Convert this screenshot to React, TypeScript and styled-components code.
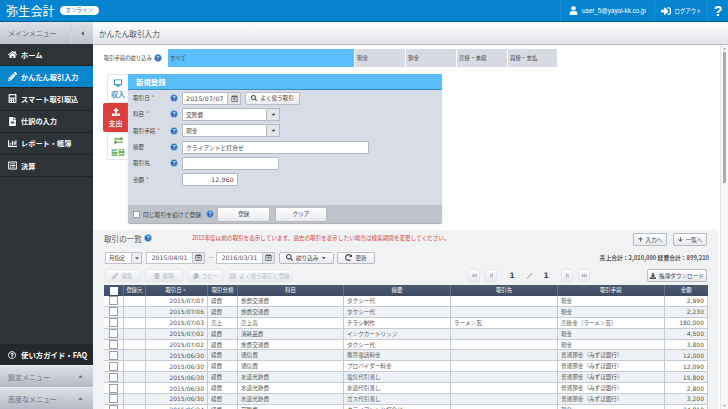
import React from 'react';
import styled, { createGlobalStyle } from 'styled-components';
import {
  FaHome, FaPencilAlt, FaUser, FaSignInAlt, FaSearch, FaRegCalendarAlt, FaCaretDown, FaCaretUp,
  FaCaretLeft, FaRedoAlt, FaArrowUp, FaArrowDown, FaDownload, FaTrashAlt, FaCopy, FaRegListAlt,
  FaStepBackward, FaStepForward, FaFastBackward, FaFastForward, FaRegQuestionCircle, FaCalculator,
  FaChartBar, FaFileAlt, FaExchangeAlt, FaDesktop, FaUpload,
} from 'react-icons/fa';

const GlobalStyle = createGlobalStyle`
  html, body { margin: 0; padding: 0; background: #fff; }
  * { box-sizing: border-box; }
  body { font-family: "DejaVu Sans", "Noto Sans CJK JP", sans-serif; color: #444; }
`;

const Page = styled.div`
  width: 728px;
  height: 409px;
  overflow: hidden;
  display: flex;
  flex-direction: column;
`;

const Header = styled.header`
  height: 22px;
  flex: none;
  background: #0784cf;
  border-bottom: 1px solid #045a90;
  display: flex;
  align-items: center;
  color: #fff;
`;

const Logo = styled.span`
  margin-left: 6px;
  font-size: 12px;
  letter-spacing: 0.2px;
  font-family: "Noto Sans CJK JP", sans-serif;
`;

const Badge = styled.span`
  margin-left: 5px;
  width: 39px;
  height: 9px;
  border-radius: 5px;
  background: #fff;
  color: #0784cf;
  font-size: 5.5px;
  line-height: 9px;
  text-align: center;
  font-family: "Noto Sans CJK JP", sans-serif;
`;

const HeaderRight = styled.div`
  margin-left: auto;
  display: flex;
  align-items: center;
  height: 100%;
`;

const HeaderCell = styled.div<{ $w: number }>`
  width: ${(p) => p.$w}px;
  height: 100%;
  display: flex;
  align-items: center;
  justify-content: center;
  gap: 4px;
  font-size: 5.4px;
  border-left: 1px solid #1b90d6;
  font-family: "Noto Sans CJK JP", sans-serif;
`;

const Email = styled.span`
  font-size: 6.3px;
  font-family: "Liberation Sans", sans-serif;
`;

const Help = styled.span`
  font-size: 14px;
  font-weight: bold;
  font-family: "Liberation Sans", sans-serif;
`;

const Body = styled.div`
  flex: 1;
  display: flex;
  min-height: 0;
`;

const Sidebar = styled.nav`
  width: 93px;
  flex: none;
  background: #2e3338;
  display: flex;
  flex-direction: column;
  font-family: "Noto Sans CJK JP", sans-serif;
`;

const MenuHead = styled.div`
  height: 22px;
  flex: none;
  background: linear-gradient(#dfe2e8, #bcc2cc);
  display: flex;
  align-items: center;
  padding-left: 8px;
  font-size: 7px;
  color: #666c76;
`;

const Collapse = styled.span`
  margin-left: auto;
  width: 22px;
  height: 100%;
  border-left: 1px solid #cfd3da;
  display: flex;
  align-items: center;
  justify-content: center;
  color: #555;
  font-size: 7px;
`;

const MenuItem = styled.div<{ $active?: boolean }>`
  height: 22.2px;
  flex: none;
  display: flex;
  align-items: center;
  gap: 4px;
  padding-left: 8px;
  font-size: 7.2px;
  font-weight: 700;
  color: #fff;
  background: ${(p) => (p.$active ? '#0a86cc' : 'transparent')};
  border-bottom: 1px solid #1f2327;
  svg { width: 9px; height: 9px; flex: none; }
`;

const Guide = styled.div`
  margin-top: auto;
  height: 21px;
  flex: none;
  display: flex;
  align-items: center;
  gap: 5px;
  padding-left: 8px;
  font-size: 7.4px;
  font-weight: 700;
  color: #fff;
  background: #24282c;
`;

const FoldMenu = styled.div`
  height: 22px;
  flex: none;
  background: linear-gradient(#dde0e6, #b4bac6);
  border-top: 1px solid #eceef1;
  display: flex;
  align-items: center;
  justify-content: space-between;
  padding: 0 9px 0 8px;
  font-size: 7px;
  color: #6d7480;
`;

const Main = styled.main`
  flex: 1;
  min-width: 0;
  display: flex;
  flex-direction: column;
`;

const TitleBar = styled.div`
  height: 23px;
  flex: none;
  background: linear-gradient(#fff, #e2e4e9);
  border-bottom: 1px solid #b9bcc2;
  display: flex;
  align-items: center;
  padding-left: 6px;
  font-size: 7.6px;
  color: #4b4f55;
  font-family: "Noto Sans CJK JP", sans-serif;
`;

const Content = styled.div`
  flex: 1;
  min-height: 0;
  display: flex;
`;

const Scroll = styled.div`
  flex: 1;
  min-width: 0;
  font-family: "Noto Sans CJK JP", sans-serif;
`;

const ScrollTrack = styled.div`
  width: 8px;
  flex: none;
  background: #f8f8f9;
  border-left: 1px solid #e4e5e8;
  display: flex;
  flex-direction: column;
  align-items: center;
  justify-content: space-between;
  color: #999;
  font-size: 5px;
  padding: 1px 0 1px;
`;

const ScrollThumb = styled.div`
  width: 3px;
  height: 131px;
  margin-bottom: auto;
  margin-top: 1px;
  background: #a9acb2;
`;

const FilterRow = styled.div`
  display: flex;
  align-items: center;
  height: 18px;
  margin: 4px 0 0 11px;
`;

const FilterLabel = styled.span`
  width: 64px;
  flex: none;
  display: flex;
  align-items: center;
  gap: 2px;
  font-size: 5.3px;
  color: #444;
`;

const HelpDot = styled.span`
  width: 8px;
  height: 8px;
  flex: none;
  border-radius: 50%;
  background: #1f61b0;
  border: 1px solid #9cc0e6;
  color: #fff;
  font-size: 5px;
  line-height: 6px;
  font-weight: bold;
  text-align: center;
  font-family: "Liberation Sans", sans-serif;
`;

const FilterTab = styled.div<{ $w: number; $active?: boolean }>`
  width: ${(p) => p.$w}px;
  height: 100%;
  margin-right: 1px;
  background: ${(p) => (p.$active ? '#5bbfff' : '#d8dbe4')};
  font-size: 5.5px;
  line-height: 18px;
  padding-left: 2px;
  color: #444;
`;

const FormArea = styled.div`
  display: flex;
  margin: 7px 0 0 10px;
  height: 149px;
`;

const SideTabs = styled.div`
  width: 25px;
  flex: none;
  display: flex;
  flex-direction: column;
  align-items: flex-end;
`;

const SideTab = styled.div<{ $h: number; $color: string; $fill?: boolean }>`
  width: ${(p) => (p.$fill ? 25 : 21)}px;
  height: ${(p) => p.$h}px;
  background: ${(p) => (p.$fill ? p.$color : '#fff')};
  color: ${(p) => (p.$fill ? '#fff' : p.$color)};
  border: ${(p) => (p.$fill ? 'none' : '1px solid #e3e5e9')};
  border-right: none;
  border-radius: 2px 0 0 2px;
  display: flex;
  flex-direction: column;
  align-items: center;
  justify-content: center;
  gap: 2px;
  font-size: 7px;
  font-weight: 500;
`;

const Panel = styled.section`
  width: 314px;
  flex: none;
  background: #d8dce6;
  display: flex;
  flex-direction: column;
  border-radius: 2px;
  box-shadow: 0 1px 1px #aaa;
`;

const PanelHead = styled.div`
  height: 16px;
  flex: none;
  background: #5bbdf8;
  border-bottom: 1px solid #3a8fc4;
  color: #fff;
  font-size: 7.4px;
  font-weight: 700;
  line-height: 15px;
  padding-left: 8px;
`;

const Fields = styled.div`
  flex: 1;
`;

const Field = styled.div`
  display: flex;
  align-items: center;
  height: 16.3px;
  padding-left: 5px;
`;

const FieldLabel = styled.span`
  width: 37px;
  flex: none;
  font-size: 5.6px;
  color: #444;
`;

const Required = styled.em`
  color: #e33;
  font-style: normal;
  margin-left: 2px;
`;

const HelpSpacer = styled.span`
  width: 8px;
  flex: none;
`;

const Input = styled.div<{ $w: number; $right?: boolean; $num?: boolean }>`
  width: ${(p) => p.$w}px;
  height: 13px;
  margin-left: 4px;
  background: #fff;
  border: 1px solid #b5b8bf;
  border-radius: 1px;
  display: flex;
  align-items: center;
  justify-content: ${(p) => (p.$right ? 'flex-end' : 'flex-start')};
  padding: 0 3px;
  font-size: ${(p) => (p.$num ? 6.2 : 5.8)}px;
  color: #444;
  white-space: nowrap;
  letter-spacing: ${(p) => (p.$num ? 0.2 : 0)}px;
  font-family: "DejaVu Sans", "Noto Sans CJK JP", sans-serif;
`;

const InputAddon = styled.span`
  width: 13px;
  height: 13px;
  flex: none;
  background: #e3e5ea;
  border: 1px solid #b5b8bf;
  border-left: none;
  display: flex;
  align-items: center;
  justify-content: center;
  font-size: 7px;
  color: #555;
`;

const Btn = styled.div<{ $w: number; $h?: number; $ml?: number; $muted?: boolean }>`
  width: ${(p) => p.$w}px;
  height: ${(p) => p.$h ?? 13}px;
  margin-left: ${(p) => p.$ml ?? 0}px;
  flex: none;
  background: linear-gradient(#fff, #e8eaee);
  border: 1px solid ${(p) => (p.$muted ? '#e0e2e6' : '#b9bcc3')};
  border-radius: 2px;
  display: flex;
  align-items: center;
  justify-content: center;
  gap: 3px;
  font-size: 5.6px;
  white-space: nowrap;
  color: ${(p) => (p.$muted ? '#a9adb4' : '#444')};
  opacity: ${(p) => (p.$muted ? 0.8 : 1)};
`;

const PanelFoot = styled.div`
  height: 18px;
  flex: none;
  background: #bfc3cc;
  display: flex;
  align-items: center;
  padding-left: 5px;
  color: #444;
`;

const FootText = styled.span`
  width: 59px;
  margin: 0 4px 0 3px;
  flex: none;
  font-size: 5.8px;
  white-space: nowrap;
`;

const CheckBox = styled.span<{ $size?: number; $white?: boolean }>`
  width: ${(p) => p.$size ?? 7}px;
  height: ${(p) => p.$size ?? 7}px;
  flex: none;
  display: inline-block;
  background: #fff;
  border: 1px solid ${(p) => (p.$white ? '#fff' : '#9a9da3')};
`;

const ListSection = styled.section`
  margin: 7px 2px 0 0;
  height: 250px;
  background: #f1f2f4;
  padding: 3px 0 0 11px;
`;

const ListTop = styled.div`
  display: flex;
  align-items: center;
  height: 13px;
`;

const ListTitle = styled.h2`
  margin: 0 0 3px;
  width: 88px;
  flex: none;
  display: flex;
  align-items: center;
  gap: 2px;
  font-size: 7.6px;
  font-weight: 400;
  color: #555;
`;

const Notice = styled.span`
  margin-bottom: 3px;
  font-size: 5.6px;
  color: #d8413f;
  white-space: nowrap;
`;

const TopButtons = styled.div`
  margin-left: auto;
  margin-right: 11px;
  display: flex;
  gap: 6px;
`;

const ControlRow = styled.div`
  display: flex;
  align-items: center;
  height: 13px;
  margin: 5px 0 0 1px;
  gap: 3px;
`;

const Totals = styled.span`
  margin-left: auto;
  margin-right: 9px;
  font-size: 5.8px;
  font-weight: bold;
  color: #555;
  white-space: nowrap;
`;

const Select = styled.div`
  display: flex;
  width: 37px;
  height: 12px;
  margin-right: 1px;
`;

const SelectText = styled.span`
  flex: 1;
  background: #fff;
  border: 1px solid #c0c3c9;
  font-size: 5.4px;
  line-height: 10px;
  padding-left: 3px;
`;

const SelectArrow = styled.span`
  width: 10px;
  background: #eceef1;
  border: 1px solid #c0c3c9;
  border-left: none;
  display: flex;
  align-items: center;
  justify-content: center;
  font-size: 6px;
  color: #555;
`;

const DateBox = styled.div`
  display: flex;
`;

const DateText = styled.span`
  width: 47px;
  height: 12px;
  background: #fff;
  border: 1px solid #c0c3c9;
  font-size: 6.2px;
  line-height: 10px;
  text-align: center;
  color: #555;
  font-family: "DejaVu Sans", sans-serif;
`;

const DateIcon = styled.span`
  width: 12px;
  height: 12px;
  background: #e6e8ec;
  border: 1px solid #c0c3c9;
  border-left: none;
  display: flex;
  align-items: center;
  justify-content: center;
  font-size: 7px;
  color: #555;
`;

const Tilde = styled.span`
  width: 5px;
  font-size: 6px;
  text-align: center;
`;

const ToolRow = styled.div`
  display: flex;
  align-items: center;
  height: 13px;
  margin: 5px 0 0 1px;
  gap: 5px;
  padding-right: 11px;
`;

const Pager = styled.div`
  margin-left: auto;
  display: flex;
  align-items: center;
  gap: 5px;
  font-family: "DejaVu Sans", sans-serif;
`;

const PagerCount = styled.div`
  display: flex;
  align-items: center;
  margin: 0 1px;
`;

const PagerNum = styled.span`
  width: 18px;
  text-align: center;
  font-size: 7.4px;
  font-weight: bold;
  color: #444;
`;

const PagerSlash = styled.span`
  width: 16px;
  text-align: center;
  font-size: 7px;
  color: #666;
`;

const DownloadWrap = styled.div`
  margin-left: 52px;
`;

const Table = styled.div`
  width: 604px;
  margin: 3px 0 0 0;
  background: #fff;
`;

const COLUMNS = '20px 21.5px 62.5px 30px 106px 107px 107px 106.5px 43.5px';

const HeadRow = styled.div`
  display: grid;
  grid-template-columns: ${COLUMNS};
  height: 11px;
  background: linear-gradient(#4a5a72, #3d4b60);
  color: #fff;
  font-size: 5.4px;
  line-height: 11px;
`;

const HeadCell = styled.div`
  display: flex;
  align-items: center;
  justify-content: center;
  border-right: 1px solid #65728a;
  &:last-child { border-right: none; }
`;

const Row = styled.div<{ $odd: boolean }>`
  display: grid;
  grid-template-columns: ${COLUMNS};
  height: 10.9px;
  background: ${(p) => (p.$odd ? '#eef2f6' : '#fff')};
  border-bottom: 1px solid #c6cad1;
  font-size: 5.6px;
  color: #555;
`;

const Cell = styled.div<{ $align?: string; $num?: boolean }>`
  display: flex;
  align-items: center;
  justify-content: ${(p) => p.$align ?? 'flex-start'};
  padding: 0 3px;
  border-right: 1px solid #c6cad1;
  white-space: nowrap;
  overflow: hidden;
  font-family: ${(p) => (p.$num ? '"DejaVu Sans", sans-serif' : 'inherit')};
  font-size: ${(p) => (p.$num ? 6 : 5.6)}px;
`;

type Tx = { date: string; kind: string; account: string; memo: string; partner: string; method: string; amount: string };

const MIZUHO = '普通預金（みずほ銀行）';

const transactions: Tx[] = [
  { date: '2015/07/07', kind: '経費', account: '旅費交通費', memo: 'タクシー代', partner: '', method: '現金', amount: '2,990' },
  { date: '2015/07/06', kind: '経費', account: '旅費交通費', memo: 'タクシー代', partner: '', method: '現金', amount: '2,230' },
  { date: '2015/07/03', kind: '売上', account: '売上高', memo: 'チラシ制作', partner: 'ラーメン瓦', method: '売掛金（ラーメン瓦）', amount: '180,000' },
  { date: '2015/07/02', kind: '経費', account: '消耗品費', memo: 'インクカートリッジ', partner: '', method: '現金', amount: '4,500' },
  { date: '2015/07/02', kind: '経費', account: '旅費交通費', memo: 'タクシー代', partner: '', method: '現金', amount: '3,800' },
  { date: '2015/06/30', kind: '経費', account: '通信費', memo: '携帯電話料金', partner: '', method: MIZUHO, amount: '12,000' },
  { date: '2015/06/30', kind: '経費', account: '通信費', memo: 'プロバイダー料金', partner: '', method: MIZUHO, amount: '12,090' },
  { date: '2015/06/30', kind: '経費', account: '水道光熱費', memo: '電気代引落し', partner: '', method: MIZUHO, amount: '15,800' },
  { date: '2015/06/30', kind: '経費', account: '水道光熱費', memo: '水道代引落し', partner: '', method: MIZUHO, amount: '2,800' },
  { date: '2015/06/30', kind: '経費', account: '水道光熱費', memo: 'ガス代引落し', partner: '', method: MIZUHO, amount: '3,200' },
  { date: '2015/06/24', kind: '経費', account: '交際費', memo: 'クライアントと打合せ', partner: '', method: '現金', amount: '24,810' },
];

const menu = [
  { label: 'ホーム', icon: <FaHome /> },
  { label: 'かんたん取引入力', icon: <FaPencilAlt />, active: true },
  { label: 'スマート取引取込', icon: <FaCalculator /> },
  { label: '仕訳の入力', icon: <FaFileAlt /> },
  { label: 'レポート・帳簿', icon: <FaChartBar /> },
  { label: '決算', icon: <FaRegListAlt /> },
];

const filters = [
  { label: 'すべて', w: 186, active: true },
  { label: '現金', w: 50 },
  { label: '預金', w: 50 },
  { label: '売掛・未収', w: 50 },
  { label: '買掛・支払', w: 49 },
];

const App: React.FC = () => (
  <Page>
    <GlobalStyle />
    <Header>
      <Logo>弥生会計</Logo>
      <Badge>オンライン</Badge>
      <HeaderRight>
        <HeaderCell $w={94}><FaUser size={9} /><Email>user_5@yayoi-kk.co.jp</Email></HeaderCell>
        <HeaderCell $w={53}><FaSignInAlt size={10} />ログアウト</HeaderCell>
        <HeaderCell $w={21}><Help>?</Help></HeaderCell>
      </HeaderRight>
    </Header>
    <Body>
      <Sidebar>
        <MenuHead>メインメニュー<Collapse><FaCaretLeft /></Collapse></MenuHead>
        {menu.map((m) => (
          <MenuItem key={m.label} $active={m.active}>{m.icon}{m.label}</MenuItem>
        ))}
        <Guide><FaRegQuestionCircle size={8} />使い方ガイド・FAQ</Guide>
        <FoldMenu>設定メニュー<FaCaretUp /></FoldMenu>
        <FoldMenu>高度なメニュー<FaCaretUp /></FoldMenu>
      </Sidebar>
      <Main>
        <TitleBar>かんたん取引入力</TitleBar>
        <Content>
          <Scroll>
            <FilterRow>
              <FilterLabel>取引手段の絞り込み<HelpDot>?</HelpDot></FilterLabel>
              {filters.map((f) => (
                <FilterTab key={f.label} $w={f.w} $active={f.active}>{f.label}</FilterTab>
              ))}
            </FilterRow>
            <FormArea>
              <SideTabs>
                <SideTab $h={29} $color="#1a7fc0"><FaDesktop size={8} />収入</SideTab>
                <SideTab $h={29} $color="#d9403c" $fill><FaUpload size={8} />支出</SideTab>
                <SideTab $h={28} $color="#4a9a2e"><FaExchangeAlt size={9} />振替</SideTab>
              </SideTabs>
              <Panel>
                <PanelHead>新規登録</PanelHead>
                <Fields>
                  <Field>
                    <FieldLabel>取引日<Required>*</Required></FieldLabel>
                    <HelpDot>?</HelpDot>
                    <Input $w={46} $num>2015/07/07</Input>
                    <InputAddon><FaRegCalendarAlt /></InputAddon>
                    <Btn $w={55} $ml={4}><FaSearch size={6} />よく使う取引</Btn>
                  </Field>
                  <Field>
                    <FieldLabel>科目<Required>*</Required></FieldLabel>
                    <HelpDot>?</HelpDot>
                    <Input $w={85}>交際費</Input>
                    <InputAddon><FaCaretDown /></InputAddon>
                  </Field>
                  <Field>
                    <FieldLabel>取引手段<Required>*</Required></FieldLabel>
                    <HelpDot>?</HelpDot>
                    <Input $w={85}>現金</Input>
                    <InputAddon><FaCaretDown /></InputAddon>
                  </Field>
                  <Field>
                    <FieldLabel>摘要</FieldLabel>
                    <HelpDot>?</HelpDot>
                    <Input $w={187}>クライアントと打合せ</Input>
                  </Field>
                  <Field>
                    <FieldLabel>取引先</FieldLabel>
                    <HelpDot>?</HelpDot>
                    <Input $w={97} />
                  </Field>
                  <Field>
                    <FieldLabel>金額<Required>*</Required></FieldLabel>
                    <HelpSpacer />
                    <Input $w={56} $right $num>12,960</Input>
                  </Field>
                </Fields>
                <PanelFoot>
                  <CheckBox />
                  <FootText>同じ取引を続けて登録</FootText>
                  <HelpDot>?</HelpDot>
                  <Btn $w={53} $h={15} $ml={3}>登録</Btn>
                  <Btn $w={52} $h={15} $ml={5}>クリア</Btn>
                </PanelFoot>
              </Panel>
            </FormArea>
            <ListSection>
              <ListTop>
                <ListTitle>取引の一覧<HelpDot>?</HelpDot></ListTitle>
                <Notice>2015年度以前の取引を表示しています。過去の取引を表示したい場合は検索期間を変更してください。</Notice>
                <TopButtons>
                  <Btn $w={34}><FaArrowUp size={5} />入力へ</Btn>
                  <Btn $w={34}><FaArrowDown size={5} />一覧へ</Btn>
                </TopButtons>
              </ListTop>
              <ControlRow>
                <Select><SelectText>月指定</SelectText><SelectArrow><FaCaretDown /></SelectArrow></Select>
                <DateBox><DateText>2015/04/01</DateText><DateIcon><FaRegCalendarAlt /></DateIcon></DateBox>
                <Tilde>…</Tilde>
                <DateBox><DateText>2016/03/31</DateText><DateIcon><FaRegCalendarAlt /></DateIcon></DateBox>
                <Btn $w={55} $h={12} $ml={1}><FaSearch size={7} />絞り込み<FaCaretDown /></Btn>
                <Btn $w={38} $h={12}><FaRedoAlt size={7} />更新</Btn>
                <Totals>売上合計：2,010,000 経費合計：899,210</Totals>
              </ControlRow>
              <ToolRow>
                <Btn $w={35} $muted><FaPencilAlt size={6} />編集</Btn>
                <Btn $w={38} $muted><FaTrashAlt size={6} />削除</Btn>
                <Btn $w={35} $muted><FaCopy size={6} />コピー</Btn>
                <Btn $w={64} $muted><FaRegListAlt size={6} />よく使う取引に登録</Btn>
                <Pager>
                  <Btn $w={12} $muted><FaFastBackward size={5} /></Btn>
                  <Btn $w={12} $muted><FaStepBackward size={5} /></Btn>
                  <PagerCount>
                    <PagerNum>1</PagerNum>
                    <PagerSlash>／</PagerSlash>
                    <PagerNum>1</PagerNum>
                  </PagerCount>
                  <Btn $w={12} $muted><FaStepForward size={5} /></Btn>
                  <Btn $w={12} $muted><FaFastForward size={5} /></Btn>
                </Pager>
                <DownloadWrap><Btn $w={60}><FaDownload size={6} />帳簿ダウンロード</Btn></DownloadWrap>
              </ToolRow>
              <Table>
                <HeadRow>
                  <HeadCell><CheckBox $white $size={8} /></HeadCell>
                  <HeadCell>登録元</HeadCell>
                  <HeadCell>取引日▫</HeadCell>
                  <HeadCell>取引分類</HeadCell>
                  <HeadCell>科目</HeadCell>
                  <HeadCell>摘要</HeadCell>
                  <HeadCell>取引先</HeadCell>
                  <HeadCell>取引手段</HeadCell>
                  <HeadCell>金額</HeadCell>
                </HeadRow>
                {transactions.map((t, i) => (
                  <Row key={i} $odd={i % 2 === 1}>
                    <Cell $align="center"><CheckBox $size={9} /></Cell>
                    <Cell />
                    <Cell $align="flex-end" $num>{t.date}</Cell>
                    <Cell>{t.kind}</Cell>
                    <Cell>{t.account}</Cell>
                    <Cell>{t.memo}</Cell>
                    <Cell>{t.partner}</Cell>
                    <Cell>{t.method}</Cell>
                    <Cell $align="flex-end" $num>{t.amount}</Cell>
                  </Row>
                ))}
              </Table>
            </ListSection>
          </Scroll>
          <ScrollTrack>
            <FaCaretUp />
            <ScrollThumb />
            <FaCaretDown />
          </ScrollTrack>
        </Content>
      </Main>
    </Body>
  </Page>
);

export default App;
